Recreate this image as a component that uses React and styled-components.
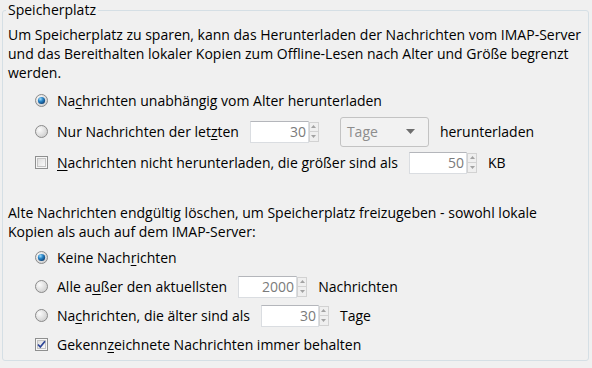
import React from "react";
import styled, { createGlobalStyle } from "styled-components";

const GlobalStyle = createGlobalStyle`
  body {
    margin: 0;
    background: #f0f0f0;
    font-family: "Open Sans", "Noto Sans", sans-serif;
    font-size: 14px;
    color: #000;
  }
`;

const Page = styled.div`
  width: 592px;
  height: 368px;
  box-sizing: border-box;
  padding-top: 1px;
  overflow: hidden;
`;

const Group = styled.fieldset`
  margin: 0 3px 0 2px;
  padding: 0 5px 1px 5px;
  border: 1px solid #d5dfe5;
  border-radius: 3px;
  min-width: 0;
`;

const Legend = styled.legend`
  margin-left: -2px;
  padding: 0 2px;
  line-height: 18px;
`;

const Text = styled.p`
  margin: ${(p) => p.$top}px 0 0;
  line-height: 19px;
`;

const Options = styled.div`
  display: flex;
  flex-direction: column;
  padding-left: 27px;
  margin-top: ${(p) => p.$top}px;
`;

const Row = styled.div`
  display: flex;
  align-items: center;
  gap: 11px;
  height: ${(p) => p.$h}px;
`;

const Choice = styled.label`
  display: flex;
  align-items: center;
  gap: 9px;
`;

const Key = styled.span`
  text-decoration: underline;
  text-underline-offset: 2px;
`;

const Spin = styled.div`
  display: flex;
  align-items: center;
  height: 22px;
`;

const Field = styled.div`
  box-sizing: border-box;
  width: ${(p) => p.$w}px;
  height: 22px;
  border: 1px solid #dadde1;
  border-top-color: #b4b6bb;
  background: #fff;
  color: #7b7b7b;
  text-align: right;
  padding-right: 2px;
  line-height: 20px;
`;

const Arrows = styled.div`
  display: flex;
  flex-direction: column;
  width: 10px;
  height: 20px;
`;

const ArrowBtn = styled.div`
  flex: 1;
  display: flex;
  align-items: center;
  justify-content: center;
  border: 1px solid #d2d2d2;
  background: #efefef;
  & + & {
    border-top: none;
  }
`;

const Select = styled.div`
  box-sizing: border-box;
  width: 89px;
  height: 30px;
  margin-left: 10px;
  border: 1px solid #c3c3c3;
  border-radius: 3px;
  background: #f2f2f2;
  color: #8d8d8d;
  display: flex;
  align-items: center;
  justify-content: space-between;
  padding: 0 13px 0 6px;
`;

const Radio = ({ checked }) => (
  <svg width="13" height="13" viewBox="0 0 13 13">
    <defs>
      <radialGradient id="rface" cx="0.35" cy="0.35" r="0.7">
        <stop offset="0" stopColor="#fbfbfb" />
        <stop offset="1" stopColor="#cfcfcf" />
      </radialGradient>
      <radialGradient id="rdot" cx="0.35" cy="0.3" r="0.75">
        <stop offset="0" stopColor="#9fdcfb" />
        <stop offset="0.45" stopColor="#2a86c8" />
        <stop offset="1" stopColor="#0c3f74" />
      </radialGradient>
    </defs>
    <circle cx="6.5" cy="6.5" r="6" fill="url(#rface)" stroke="#8a8a8a" />
    {checked && <circle cx="6.5" cy="6.5" r="3.6" fill="url(#rdot)" />}
  </svg>
);

const Check = ({ checked }) => (
  <svg width="13" height="13" viewBox="0 0 13 13">
    <defs>
      <linearGradient id="cface" x1="0" y1="0" x2="1" y2="1">
        <stop offset="0" stopColor="#dcdcdc" />
        <stop offset="1" stopColor="#fbfbfb" />
      </linearGradient>
    </defs>
    <rect x="0.5" y="0.5" width="12" height="12" fill="#f6f6f6" stroke="#8e8f8f" />
    <rect x="2.5" y="2.5" width="8" height="8" fill="url(#cface)" stroke="#c4c4c4" />
    {checked && (
      <path d="M3 6.5 L5.3 9 L10 3.2" fill="none" stroke="#2b4496" strokeWidth="1.7" />
    )}
  </svg>
);

const Triangle = ({ up }) => (
  <svg width="5" height="3" viewBox="0 0 5 3">
    <path d={up ? "M0 3 L2.5 0 L5 3 Z" : "M0 0 L2.5 3 L5 0 Z"} fill="#a2a2a2" />
  </svg>
);

const SpinBox = ({ value, w = 59 }) => (
  <Spin>
    <Field $w={w}>{value}</Field>
    <Arrows>
      <ArrowBtn>
        <Triangle up />
      </ArrowBtn>
      <ArrowBtn>
        <Triangle />
      </ArrowBtn>
    </Arrows>
  </Spin>
);

export default function App() {
  return (
    <Page>
      <GlobalStyle />
      <Group>
        <Legend>Speicherplatz</Legend>
        <Text $top={6}>
          Um Speicherplatz zu sparen, kann das Herunterladen der Nachrichten vom IMAP-Server
          <br />
          und das Bereithalten lokaler Kopien zum Offline-Lesen nach Alter und Größe begrenzt
          <br />
          werden.
        </Text>
        <Options $top={3}>
          <Row $h={31}>
            <Choice>
              <Radio checked />
              <span>
                Na<Key>c</Key>hrichten unabhängig vom Alter herunterladen
              </span>
            </Choice>
          </Row>
          <Row $h={31}>
            <Choice>
              <Radio />
              <span>
                Nur Nachrichten der let<Key>z</Key>ten
              </span>
            </Choice>
            <SpinBox value="30" />
            <Select>
              <span>Tage</span>
              <svg width="9" height="5" viewBox="0 0 9 5">
                <path d="M0 0 L9 0 L4.5 5 Z" fill="#6e6e6e" />
              </svg>
            </Select>
            <span>herunterladen</span>
          </Row>
          <Row $h={31}>
            <Choice>
              <Check />
              <span>
                <Key>N</Key>achrichten nicht herunterladen, die größer sind als
              </span>
            </Choice>
            <SpinBox value="50" w={58} />
            <span>KB</span>
          </Row>
        </Options>
        <Text $top={25}>
          Alte Nachrichten endgültig löschen, um Speicherplatz freizugeben - sowohl lokale
          <br />
          Kopien als auch auf dem IMAP-Server:
        </Text>
        <Options $top={2}>
          <Row $h={29}>
            <Choice>
              <Radio checked />
              <span>
                Keine Nach<Key>r</Key>ichten
              </span>
            </Choice>
          </Row>
          <Row $h={29}>
            <Choice>
              <Radio />
              <span>
                Alle a<Key>u</Key>ßer den aktuellsten
              </span>
            </Choice>
            <SpinBox value="2000" />
            <span>Nachrichten</span>
          </Row>
          <Row $h={29}>
            <Choice>
              <Radio />
              <span>
                Na<Key>c</Key>hrichten, die älter sind als
              </span>
            </Choice>
            <SpinBox value="30" w={58} />
            <span>Tage</span>
          </Row>
          <Row $h={29}>
            <Choice>
              <Check checked />
              <span>
                Gekenn<Key>z</Key>eichnete Nachrichten immer behalten
              </span>
            </Choice>
          </Row>
        </Options>
      </Group>
    </Page>
  );
}
